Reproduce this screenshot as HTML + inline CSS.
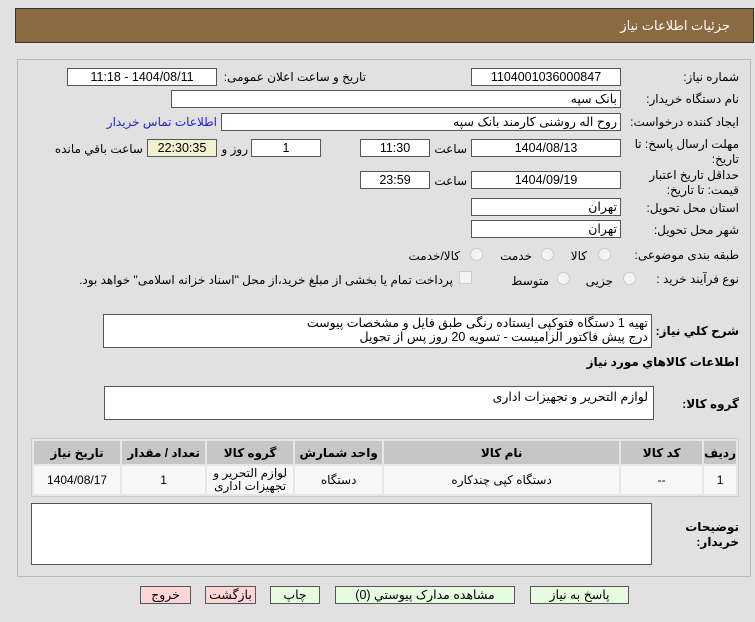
<!DOCTYPE html>
<html><head><meta charset="utf-8"><style>
*{margin:0;padding:0;box-sizing:border-box}
body{width:755px;height:622px;background:#e1e1e1;font-family:"Liberation Sans","DejaVu Sans",sans-serif;font-size:12px;color:#000;position:relative;overflow:hidden;direction:rtl}
.a{position:absolute;white-space:nowrap}
.f{position:absolute;background:#fff;border:1px solid #555;text-align:center;line-height:16px;font-size:12.5px}
.l{position:absolute;white-space:nowrap;text-align:right}
.r{position:absolute;width:13px;height:13px;border:1px solid #ccc;border-radius:50%;background:#f4f4f4}
.btn{position:absolute;height:18px;border:1px solid #555;text-align:center;line-height:16px;font-size:12.5px}
table{border-collapse:separate;border-spacing:2px}
td,th{text-align:center;font-size:12px}
</style></head><body>
<div class="a" style="left:15px;top:8px;width:739px;height:35px;background:#8b6a42;border:1px solid #333"></div>
<div class="a" style="right:25px;top:18px;color:#fff;font-size:13px">جزئیات اطلاعات نیاز</div>
<div class="a" style="left:17px;top:59px;width:734px;height:518px;border:1px solid #bbb;background:#e1e1e1"></div>

<div class="l" style="right:16px;top:70px">شماره نیاز:</div>
<div class="f" style="left:471px;top:68px;width:150px;height:18px">1104001036000847</div>
<div class="l" style="right:389px;top:70px">تاریخ و ساعت اعلان عمومی:</div>
<div class="f" style="left:67px;top:68px;width:150px;height:18px">1404/08/11 - 11:18</div>

<div class="l" style="right:16px;top:92px">نام دستگاه خریدار:</div>
<div class="f" style="left:171px;top:90px;width:450px;height:18px;text-align:right;padding-right:3px">بانک سپه</div>

<div class="l" style="right:16px;top:115px">ایجاد کننده درخواست:</div>
<div class="f" style="left:221px;top:113px;width:400px;height:18px;text-align:right;padding-right:3px">روح اله روشنی کارمند بانک سپه</div>
<div class="l" style="right:538px;top:115px;color:#2222dd">اطلاعات تماس خریدار</div>

<div class="l" style="right:16px;top:137px;line-height:15px">مهلت ارسال پاسخ: تا<br>تاریخ:</div>
<div class="f" style="left:471px;top:139px;width:150px;height:18px">1404/08/13</div>
<div class="l" style="right:288px;top:142px">ساعت</div>
<div class="f" style="left:360px;top:139px;width:70px;height:18px">11:30</div>
<div class="f" style="left:251px;top:139px;width:70px;height:18px">1</div>
<div class="l" style="right:507px;top:142px">روز و</div>
<div class="f" style="left:147px;top:139px;width:70px;height:18px;background:#f3f0cf">22:30:35</div>
<div class="l" style="right:612px;top:142px">ساعت باقي مانده</div>

<div class="l" style="right:16px;top:168px;line-height:15px">حداقل تاریخ اعتبار<br>قیمت: تا تاریخ:</div>
<div class="f" style="left:471px;top:171px;width:150px;height:18px">1404/09/19</div>
<div class="l" style="right:288px;top:174px">ساعت</div>
<div class="f" style="left:360px;top:171px;width:70px;height:18px">23:59</div>

<div class="l" style="right:16px;top:201px">استان محل تحویل:</div>
<div class="f" style="left:471px;top:198px;width:150px;height:18px;text-align:right;padding-right:3px">تهران</div>
<div class="l" style="right:16px;top:223px">شهر محل تحویل:</div>
<div class="f" style="left:471px;top:220px;width:150px;height:18px;text-align:right;padding-right:3px">تهران</div>

<div class="l" style="right:16px;top:248px">طبقه بندی موضوعی:</div>
<div class="r" style="left:598px;top:248px"></div><div class="l" style="right:168px;top:249px">کالا</div>
<div class="r" style="left:541px;top:248px"></div><div class="l" style="right:223px;top:249px">خدمت</div>
<div class="r" style="left:470px;top:248px"></div><div class="l" style="right:295px;top:249px">کالا/خدمت</div>

<div class="l" style="right:16px;top:272px">نوع فرآیند خرید :</div>
<div class="r" style="left:623px;top:272px"></div><div class="l" style="right:142px;top:274px">جزیی</div>
<div class="r" style="left:557px;top:272px"></div><div class="l" style="right:206px;top:274px">متوسط</div>
<div class="a" style="left:459px;top:271px;width:13px;height:13px;border:1px solid #ccc;background:#f4f4f4"></div>
<div class="l" style="right:302px;top:273px">پرداخت تمام یا بخشی از مبلغ خرید،از محل "اسناد خزانه اسلامی" خواهد بود.</div>

<div class="l" style="right:16px;top:324px;font-weight:bold">شرح کلي نیاز:</div>
<div class="f" style="left:103px;top:314px;width:549px;height:34px;text-align:right;padding-right:3px;line-height:14px;padding-top:1px">تهیه 1 دستگاه فتوکپی ایستاده رنگی طبق فایل و مشخصات پیوست<br>درج پیش فاکتور الزامیست - تسویه 20 روز پس از تحویل</div>
<div class="l" style="right:16px;top:355px;font-weight:bold">اطلاعات کالاهاي مورد نیاز</div>
<div class="l" style="right:16px;top:397px;font-weight:bold">گروه کالا:</div>
<div class="f" style="left:104px;top:386px;width:550px;height:34px;text-align:right;padding-right:5px;padding-top:2px">لوازم التحریر و تجهیزات اداری</div>

<div class="a" style="left:31px;top:438px;width:708px;height:59px;border:1px solid #ccc;background:#e6e6e6">
<table style="width:706px;height:57px">
<tr style="background:#c6c6c6;height:23px"><th style="width:28px">ردیف</th><th style="width:81px">کد کالا</th><th style="width:235px">نام کالا</th><th style="width:87px">واحد شمارش</th><th style="width:86px">گروه کالا</th><th style="width:83px">تعداد / مقدار</th><th>تاریخ نیاز</th></tr>
<tr style="background:#f7f7f7"><td>1</td><td>--</td><td>دستگاه کپی چندکاره</td><td>دستگاه</td><td style="line-height:13px">لوازم التحریر و<br>تجهیزات اداری</td><td>1</td><td>1404/08/17</td></tr>
</table></div>

<div class="f" style="left:31px;top:503px;width:621px;height:62px"></div>
<div class="l" style="right:16px;top:520px;font-weight:bold;line-height:15px">توضیحات<br>خریدار:</div>

<div class="btn" style="left:530px;top:586px;width:99px;background:#e6fbe0">پاسخ به نیاز</div>
<div class="btn" style="left:335px;top:586px;width:180px;background:#e6fbe0">مشاهده مدارک پیوستي (0)</div>
<div class="btn" style="left:270px;top:586px;width:50px;background:#e6fbe0">چاپ</div>
<div class="btn" style="left:205px;top:586px;width:51px;background:#ffd6d6">بازگشت</div>
<div class="btn" style="left:140px;top:586px;width:51px;background:#ffd6d6">خروج</div>
</body></html>
